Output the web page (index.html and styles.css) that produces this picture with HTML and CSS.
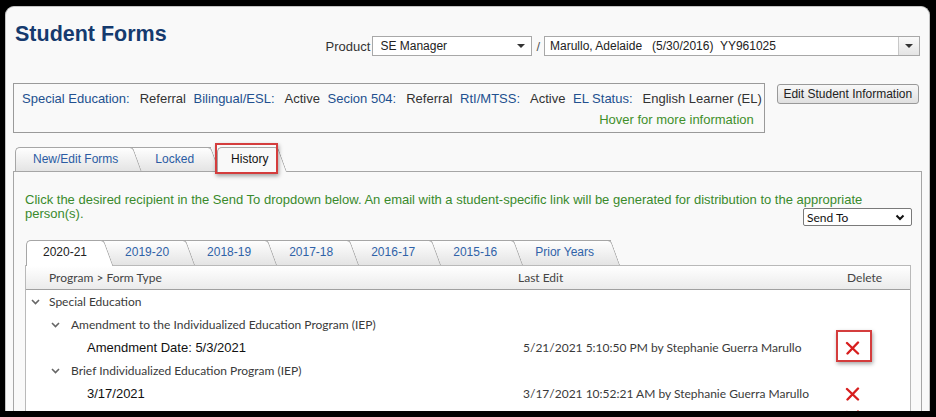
FILE: index.html
```html
<!DOCTYPE html>
<html lang="en">
<head>
    <meta charset="UTF-8">
    <title>Student Forms</title>
    <link rel="stylesheet" href="styles.css">
</head>
<body>
<div class="page">

    <!-- Header -->
    <header class="top">
        <h1>Student Forms</h1>
        <div class="product">
            <span class="product-label">Product</span>
            <div class="fake-select sel-product"><span>SE Manager</span><i class="caret"></i></div>
            <span class="slash">/</span>
            <div class="fake-select sel-student">
                <span class="student-name">Marullo, Adelaide   (5/30/2016)  YY961025</span>
                <span class="drop-btn"><i class="caret"></i></span>
            </div>
        </div>
    </header>

    <!-- Program status -->
    <div class="info-row">
        <div class="info-box">
            <div class="status-line">
                <span class="lbl">Special Education:</span><span class="val">Referral</span>
                <span class="lbl">Bilingual/ESL:</span><span class="val">Active</span>
                <span class="lbl">Secion 504:</span><span class="val">Referral</span>
                <span class="lbl">RtI/MTSS:</span><span class="val">Active</span>
                <span class="lbl">EL Status:</span><span class="val">English Learner (EL)</span>
            </div>
            <div class="hover-note">Hover for more information</div>
        </div>
        <button class="btn-edit">Edit Student Information</button>
    </div>

    <!-- Main tabs -->
    <nav class="tabs">
        <span class="tab tab-first">New/Edit Forms</span>
        <span class="tab tab-locked">Locked</span>
        <span class="tab active">History<span class="callout"></span></span>
    </nav>

    <section class="panel">
        <p class="notice">Click the desired recipient in the Send To dropdown below. An email with a student-specific link will be generated for distribution to the appropriate person(s).</p>
        <div class="send-row">
            <div class="send-select">
                <span>Send To</span>
                <svg width="10" height="7" viewBox="0 0 10 7"><polyline points="1.5,1.5 5,5 8.5,1.5" fill="none" stroke="#111" stroke-width="2"/></svg>
            </div>
        </div>

        <!-- School years -->
        <div class="year-tabs">
            <span class="ytab active">2020-21</span>
            <span class="ytab">2019-20</span>
            <span class="ytab">2018-19</span>
            <span class="ytab">2017-18</span>
            <span class="ytab">2016-17</span>
            <span class="ytab">2015-16</span>
            <span class="ytab">Prior Years</span>
        </div>

        <div class="forms-table">
            <div class="grid-row head">
                <span class="c-name">Program &gt; Form Type</span>
                <span>Last Edit</span>
                <span class="c-del-head">Delete</span>
            </div>

            <div class="grid-row">
                <span class="lvl1"><svg class="chev" width="9" height="6" viewBox="0 0 9 6"><polyline points="1,1 4.5,4.5 8,1" fill="none" stroke="#666" stroke-width="1.6"/></svg>Special Education</span>
                <span></span><span></span>
            </div>
            <div class="grid-row">
                <span class="lvl2"><svg class="chev" width="9" height="6" viewBox="0 0 9 6"><polyline points="1,1 4.5,4.5 8,1" fill="none" stroke="#666" stroke-width="1.6"/></svg>Amendment to the Individualized Education Program (IEP)</span>
                <span></span><span></span>
            </div>
            <div class="grid-row">
                <span class="lvl3">Amendment Date: 5/3/2021</span>
                <span class="c-edit">5/21/2021 5:10:50 PM by Stephanie Guerra Marullo</span>
                <span class="c-del">
                    <span class="del-mark">
                        <svg width="15" height="14" viewBox="0 0 15 14"><path d="M2 2 L13 12.5 M13 1.5 L2.5 12.5" stroke="#d71e1e" stroke-width="2.4" stroke-linecap="round"/></svg>
                        <span class="del-callout"></span>
                    </span>
                </span>
            </div>
            <div class="grid-row">
                <span class="lvl2"><svg class="chev" width="9" height="6" viewBox="0 0 9 6"><polyline points="1,1 4.5,4.5 8,1" fill="none" stroke="#666" stroke-width="1.6"/></svg>Brief Individualized Education Program (IEP)</span>
                <span></span><span></span>
            </div>
            <div class="grid-row">
                <span class="lvl3">3/17/2021</span>
                <span class="c-edit">3/17/2021 10:52:21 AM by Stephanie Guerra Marullo</span>
                <span class="c-del">
                    <span class="del-mark">
                        <svg width="15" height="14" viewBox="0 0 15 14"><path d="M2 2 L13 12.5 M13 1.5 L2.5 12.5" stroke="#d71e1e" stroke-width="2.4" stroke-linecap="round"/></svg>
                    </span>
                </span>
            </div>
            <div class="grid-row">
                <span class="lvl3">9/8/2020 Form Only Brief Individualized Education Program (IEP)</span>
                <span class="c-edit">9/16/2020 5:54:27 PM by Stephanie Marullo PM</span>
                <span class="c-del">
                    <span class="del-mark">
                        <svg width="15" height="14" viewBox="0 0 15 14"><path d="M2 2 L13 12.5 M13 1.5 L2.5 12.5" stroke="#d71e1e" stroke-width="2.4" stroke-linecap="round"/></svg>
                    </span>
                </span>
            </div>
        </div>
    </section>

</div>
</body>
</html>
```

FILE: styles.css
```css
* {
    box-sizing: border-box;
}

body {
    margin: 0;
    background: #000;
    font-family: "Liberation Sans", Arial, sans-serif;
    font-size: 13px;
    color: #333;
}

.page {
    margin: 6px 6px 0 5px;
    height: 405px;
    overflow: hidden;
    background: #f9f9f9;
    border: 1px solid #c4c4c4;
    border-bottom: none;
    border-radius: 9px 9px 0 0;
}

/* Header */
.top {
    display: flex;
    align-items: flex-start;
    padding: 14px 9px 0 9px;
}

h1 {
    margin: 0;
    font-size: 21.5px;
    line-height: 26px;
    color: #153a6e;
}

.product {
    margin-left: auto;
    margin-top: 15px;
    display: flex;
    align-items: center;
}

.product-label {
    margin-right: 2px;
    color: #333;
}

.slash {
    margin: 0 4px;
    color: #555;
}

.fake-select {
    height: 20px;
    display: flex;
    align-items: center;
    background: #fff;
    border: 1px solid #a8a8a8;
    font-size: 12px;
    color: #222;
}

.sel-product {
    width: 160px;
    padding: 0 6px 0 7px;
    justify-content: space-between;
}

.sel-student {
    width: 376px;
    padding-left: 5px;
}

.student-name {
    white-space: pre;
}

.drop-btn {
    margin-left: auto;
    width: 21px;
    height: 100%;
    border-left: 1px solid #c8c8c8;
    background: linear-gradient(#fafafa, #e4e4e4);
    display: flex;
    align-items: center;
    justify-content: center;
}

.caret {
    width: 0;
    height: 0;
    border-top: 4px solid #333;
    border-left: 4px solid transparent;
    border-right: 4px solid transparent;
}

/* Status box */
.info-row {
    display: flex;
    align-items: flex-start;
    margin: 27px 0 0 7px;
}

.info-box {
    border: 1px solid #9a9a9a;
    height: 50px;
    padding: 7px 2px 4px 8px;
}

.status-line {
    line-height: 16px;
    white-space: nowrap;
}

.lbl {
    color: #22508f;
}

.val {
    margin-left: 10px;
    color: #333;
}

.val + .lbl {
    margin-left: 4px;
}

.hover-note {
    margin-top: 5px;
    padding-right: 8px;
    line-height: 16px;
    text-align: right;
    color: #3f8f2a;
}

.btn-edit {
    margin: 1px 0 0 12px;
    width: 142px;
    height: 20px;
    padding: 0;
    font-family: "Liberation Sans", Arial, sans-serif;
    font-size: 12px;
    color: #222;
    background: linear-gradient(#f8f8f8, #e0e0e0);
    border: 1px solid #999;
    border-radius: 3px;
}

/* Tabs (shared look) */
.tab,
.ytab {
    position: relative;
    font-size: 12px;
    color: #2a5ba3;
    border: 1px solid #a6a6a6;
    border-right: none;
    border-bottom: none;
    border-radius: 5px 0 0 0;
    background: linear-gradient(#fefefe, #e4e4e4);
    white-space: nowrap;
}

.tab::after,
.ytab::after {
    content: '';
    position: absolute;
    top: -1px;
    bottom: 0;
    right: 0;
    width: 20px;
    border-top: 1px solid #a6a6a6;
    border-right: 1px solid #a6a6a6;
    border-radius: 0 4px 0 0;
    background: inherit;
    transform: skewX(20deg);
    transform-origin: top right;
    z-index: -1;
}

.tabs {
    display: flex;
    align-items: flex-end;
    height: 24px;
    margin: 14px 0 0 9px;
    position: relative;
    z-index: 2;
}

.tab {
    height: 24px;
    line-height: 22px;
    margin-right: -5px;
}

.tab-first {
    padding: 0 15px 0 17px;
    z-index: 3;
}

.tab-locked {
    padding: 0 17px 0 26px;
    z-index: 2;
}

.tab.active {
    height: 25px;
    margin: 0 0 -1px 11px;
    padding: 0 10px 0 13px;
    color: #111;
    background: #f9f9f9;
    z-index: 5;
}

.callout {
    position: absolute;
    left: -3px;
    top: -5px;
    width: 63px;
    height: 31px;
    border: 2px solid #d43d3d;
    box-shadow: 1px 2px 4px rgba(0, 0, 0, 0.35);
}

/* Panel */
.panel {
    position: relative;
    z-index: 1;
    margin-left: 7px;
    width: 909px;
    height: 300px;
    border: 1px solid #a6a6a6;
    border-bottom: none;
    padding: 21px 9px 0 11px;
}

.notice {
    margin: 0;
    max-width: 870px;
    line-height: 14px;
    color: #3a8a2c;
}

.send-row {
    display: flex;
    justify-content: flex-end;
    margin-top: -13px;
}

.send-select {
    width: 109px;
    height: 18px;
    display: flex;
    align-items: center;
    justify-content: space-between;
    padding: 0 6px 0 3px;
    background: #fff;
    border: 1px solid #7a7a7a;
    border-radius: 2px;
    font-family: Lato, sans-serif;
    font-size: 12px;
    color: #111;
}

/* Year tabs */
.year-tabs {
    display: flex;
    align-items: flex-end;
    height: 25px;
    margin: 14px 0 0 1px;
    position: relative;
    z-index: 2;
}

.ytab {
    height: 25px;
    line-height: 23px;
    padding: 0 17px 0 24px;
    margin-right: -4px;
    color: #2f62a8;
}

.ytab:nth-child(2) { z-index: 6; }
.ytab:nth-child(3) { z-index: 5; }
.ytab:nth-child(4) { z-index: 4; }
.ytab:nth-child(5) { z-index: 3; }
.ytab:nth-child(6) { z-index: 2; }
.ytab:nth-child(7) { z-index: 1; }

.ytab.active {
    height: 26px;
    margin-bottom: -1px;
    padding-left: 16px;
    color: #222;
    background: #fff;
    z-index: 7;
}

/* Forms table */
.forms-table {
    position: relative;
    z-index: 1;
    width: 886px;
    height: 200px;
    border: 1px solid #b9b9b9;
    border-bottom: none;
    background: #fff;
}

.grid-row {
    display: grid;
    grid-template-columns: 492px 322px 1fr;
    align-items: center;
    height: 23px;
    font-family: Lato, sans-serif;
    font-size: 12px;
    color: #3a3a3a;
    white-space: nowrap;
}

.grid-row.head {
    height: 24px;
    background: linear-gradient(#fff, #ebebeb);
    border-bottom: 1px solid #a0a0a0;
    color: #444;
}

.c-name {
    padding-left: 23px;
}

.c-del-head {
    padding-left: 7px;
}

.lvl1,
.lvl2 {
    display: flex;
    align-items: center;
}

.lvl1 {
    padding-left: 5px;
}

.lvl2 {
    padding-left: 25px;
}

.lvl1 .chev {
    margin-right: 9px;
}

.lvl2 .chev {
    margin-right: 11px;
}

.lvl3 {
    padding-left: 61px;
    font-family: "Liberation Sans", Arial, sans-serif;
    font-size: 13px;
    color: #111;
}

.c-edit {
    padding-left: 5px;
}

.c-del {
    padding-left: 5px;
    display: flex;
    align-items: center;
}

.del-mark {
    position: relative;
    display: inline-flex;
}

.del-callout {
    position: absolute;
    left: -9px;
    top: -11px;
    width: 36px;
    height: 32px;
    border: 2px solid #d43d3d;
    box-shadow: 1px 2px 4px rgba(0, 0, 0, 0.35);
}
```
